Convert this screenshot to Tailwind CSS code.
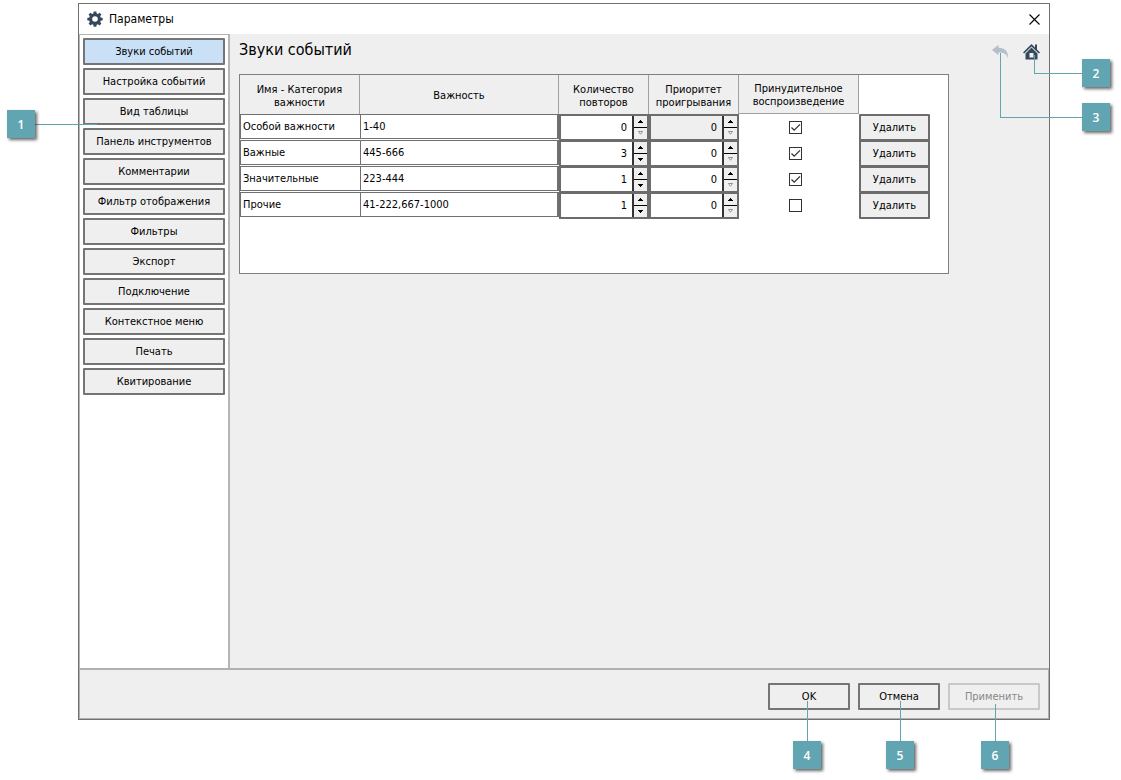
<!DOCTYPE html>
<html lang="ru">
<head>
<meta charset="utf-8">
<title>Параметры</title>
<script src="https://cdn.jsdelivr.net/npm/@tailwindcss/browser@4"></script>
</head>
<body class="bg-white text-black text-[11px] leading-[13px] font-['DejaVu_Sans_Condensed','DejaVu_Sans',sans-serif]">
<svg class="hidden">
  <symbol id="up" viewBox="0 0 5 3"><path d="M2 0h1v1h1v1h1v1H0V2h1V1h1z"/></symbol>
  <symbol id="down" viewBox="0 0 5 3"><path d="M0 0h5v1H4v1H3v1H2V2H1V1H0z"/></symbol>
  <symbol id="down-off" viewBox="0 0 5 4"><path d="M.5.5h4L2.500 3.200z" fill="#fff" stroke="#777" stroke-width=".8"/></symbol>
</svg>
<div class="min-h-screen flex flex-col pt-[3px] pb-[60px] pl-[78px] pr-[71px]">
<main class="relative grow flex flex-col border border-[#707070] bg-[#efefef]">
  <header class="h-[30px] bg-white flex items-center pl-2 pr-[9px] gap-1.5">
    <svg class="size-4" viewBox="0 0 16 16" fill="#34495e" fill-rule="evenodd"><path d="M6.700 .5h2.600l.4 2 1.200.5 1.700-1.200 1.800 1.800-1.200 1.700.5 1.200 2 .4v2.400l-2 .4-.5 1.200 1.200 1.700-1.800 1.800-1.700-1.200-1.200.5-.4 2H6.700l-.4-2-1.200-.5-1.700 1.200-1.800-1.800 1.200-1.700-.5-1.200-2-.4V6.900l2-.4.5-1.200-1.200-1.700 1.800-1.800 1.700 1.200 1.200-.5zM8 5.200a2.800 2.800 0 1 0 0 5.600 2.800 2.800 0 0 0 0-5.600z"/></svg>
    <h1 class="text-[12px]">Параметры</h1>
    <button type="button" aria-label="Закрыть" class="ml-auto"><svg class="size-[11px]" viewBox="0 0 11 11" stroke="#000" stroke-width="1.100"><path d="M.5.5l10 10M10.500.5l-10 10"/></svg></button>
  </header>
  <div class="grow flex border-l border-[#b5b5b5]">
    <nav class="w-[150px] shrink-0 bg-white border-t border-r-2 border-[#b5b5b5] pt-[3px] px-[3px] flex flex-col gap-[3px]">
      <button type="button" class="h-[27px] border-2 border-[#757575] rounded-[1px] bg-[#c9e0f7]">Звуки событий</button>
      <button type="button" class="h-[27px] border-2 border-[#757575] rounded-[1px] bg-[#efefef]">Настройка событий</button>
      <button type="button" class="h-[27px] border-2 border-[#757575] rounded-[1px] bg-[#efefef]">Вид таблицы</button>
      <button type="button" class="h-[27px] border-2 border-[#757575] rounded-[1px] bg-[#efefef]">Панель инструментов</button>
      <button type="button" class="h-[27px] border-2 border-[#757575] rounded-[1px] bg-[#efefef]">Комментарии</button>
      <button type="button" class="h-[27px] border-2 border-[#757575] rounded-[1px] bg-[#efefef]">Фильтр отображения</button>
      <button type="button" class="h-[27px] border-2 border-[#757575] rounded-[1px] bg-[#efefef]">Фильтры</button>
      <button type="button" class="h-[27px] border-2 border-[#757575] rounded-[1px] bg-[#efefef]">Экспорт</button>
      <button type="button" class="h-[27px] border-2 border-[#757575] rounded-[1px] bg-[#efefef]">Подключение</button>
      <button type="button" class="h-[27px] border-2 border-[#757575] rounded-[1px] bg-[#efefef]">Контекстное меню</button>
      <button type="button" class="h-[27px] border-2 border-[#757575] rounded-[1px] bg-[#efefef]">Печать</button>
      <button type="button" class="h-[27px] border-2 border-[#757575] rounded-[1px] bg-[#efefef]">Квитирование</button>
    </nav>
    <section class="grow pl-[9px] pr-[9px]">
      <div class="flex items-center h-[40px] pb-2">
        <h2 class="text-[16px] leading-5 grow">Звуки событий</h2>
        <div class="flex gap-3.5 pt-1">
          <button type="button" disabled aria-label="Назад"><svg class="w-[17px] h-4" viewBox="0 0 17 16" fill="#b5bfc9"><path d="M0 6L6.500.8v2.900c6.500 0 10 3.600 9.500 10.500-1.500-4.200-4-5.700-9.500-5.700v2.700z"/></svg></button>
          <button type="button" aria-label="Домой"><svg class="w-[17px] h-4" viewBox="0 0 17 16" fill="#34495e"><path d="M8.500 0L12 3.400V.5h2v4.900l3 3-1.200 1.200L8.500 2.400 1.200 9.600 0 8.400z"/><path fill-rule="evenodd" d="M8.500 3.600L14.500 9.500V15.500h-12V9.500zM6.500 9v4.500h4V9z"/></svg></button>
        </div>
      </div>
      <div class="w-[710px] max-w-full h-[200px] bg-white border border-[#808080]">
        <table class="table-fixed w-[690px] border-separate border-spacing-0">
          <colgroup><col class="w-[120px]"><col class="w-[199px]"><col class="w-[90px]"><col class="w-[90px]"><col class="w-[120px]"><col class="w-[71px]"></colgroup>
          <thead>
            <tr class="h-[39px]">
              <th scope="col" class="p-0 pt-0.5 font-normal bg-[#efefef] border-r border-[#a0a0a0]">Имя - Категория<br>важности</th>
              <th scope="col" class="p-0 pt-0.5 font-normal bg-[#efefef] border-r border-[#a0a0a0]">Важность</th>
              <th scope="col" class="p-0 pt-0.5 font-normal bg-[#efefef] border-r border-[#a0a0a0]">Количество<br>повторов</th>
              <th scope="col" class="p-0 pt-0.5 font-normal bg-[#efefef] border-r border-[#a0a0a0]">Приоритет<br>проигрывания</th>
              <th scope="col" class="p-0 pt-0.5 font-normal bg-[#efefef] border-r border-b border-[#a0a0a0]">Принудительное<br>воспроизведение</th>
              <td></td>
            </tr>
          </thead>
          <tbody>
            <tr class="h-[26px]">
              <td class="p-0 align-top"><input aria-label="Имя категории 1" value="Особой важности" class="block w-full h-[25px] pl-0.5 border-y border-l border-[#707070] bg-white"></td>
              <td class="p-0 align-top"><input aria-label="Важность 1" value="1-40" class="block w-full h-[25px] pl-0.5 border border-r-2 border-[#707070] bg-white"></td>
              <td class="p-0 align-top"><div class="flex h-[27px] -mb-px border-2 border-[#6c6c6c]">
                <input inputmode="numeric" aria-label="Количество повторов 1" value="0" class="min-w-0 grow text-right pr-[5px] bg-white">
                <div class="w-[15px] shrink-0 flex flex-col border-l-2 border-[#333333] bg-[#efefef]">
                  <button type="button" aria-label="Больше" class="grow flex items-center justify-center border-b border-black"><svg class="w-[5px] h-[3px]"><use href="#up"/></svg></button>
                  <button type="button" disabled aria-label="Меньше" class="grow flex items-center justify-center"><svg class="w-[5px] h-1"><use href="#down-off"/></svg></button>
                </div></div></td>
              <td class="p-0 align-top"><div class="flex h-[27px] -mb-px border-2 border-[#6c6c6c]">
                <input inputmode="numeric" disabled aria-label="Приоритет проигрывания 1" value="0" class="min-w-0 grow text-right pr-[5px] bg-[#efefef]">
                <div class="w-[15px] shrink-0 flex flex-col border-l-2 border-[#333333] bg-[#efefef]">
                  <button type="button" aria-label="Больше" class="grow flex items-center justify-center border-b border-black"><svg class="w-[5px] h-[3px]"><use href="#up"/></svg></button>
                  <button type="button" disabled aria-label="Меньше" class="grow flex items-center justify-center"><svg class="w-[5px] h-1"><use href="#down-off"/></svg></button>
                </div></div></td>
              <td class="p-0"><label class="grid w-[13px] h-[13px] ml-[50px]"><input type="checkbox" checked aria-label="Принудительное воспроизведение 1" class="peer appearance-none size-[13px] border border-[#333333] bg-white [grid-area:1/1]"><svg class="invisible peer-checked:visible size-[13px] [grid-area:1/1] pointer-events-none" viewBox="0 0 13 13" fill="none" stroke="#333" stroke-width="1.300"><path d="M2.500 6.500L5.200 9.200 11 3.400"/></svg></label></td>
              <td class="p-0 align-top"><button type="button" class="block w-full h-[27px] -mb-px border-2 border-[#6c6c6c] rounded-[1px] bg-[#efefef]">Удалить</button></td>
            </tr>
            <tr class="h-[26px]">
              <td class="p-0 align-top"><input aria-label="Имя категории 2" value="Важные" class="block w-full h-[25px] pl-0.5 border-y border-l border-[#707070] bg-white"></td>
              <td class="p-0 align-top"><input aria-label="Важность 2" value="445-666" class="block w-full h-[25px] pl-0.5 border border-r-2 border-[#707070] bg-white"></td>
              <td class="p-0 align-top"><div class="flex h-[27px] -mb-px border-2 border-[#6c6c6c]">
                <input inputmode="numeric" aria-label="Количество повторов 2" value="3" class="min-w-0 grow text-right pr-[5px] bg-white">
                <div class="w-[15px] shrink-0 flex flex-col border-l-2 border-[#333333] bg-[#efefef]">
                  <button type="button" aria-label="Больше" class="grow flex items-center justify-center border-b border-black"><svg class="w-[5px] h-[3px]"><use href="#up"/></svg></button>
                  <button type="button" aria-label="Меньше" class="grow flex items-center justify-center"><svg class="w-[5px] h-[3px]"><use href="#down"/></svg></button>
                </div></div></td>
              <td class="p-0 align-top"><div class="flex h-[27px] -mb-px border-2 border-[#6c6c6c]">
                <input inputmode="numeric" aria-label="Приоритет проигрывания 2" value="0" class="min-w-0 grow text-right pr-[5px] bg-white">
                <div class="w-[15px] shrink-0 flex flex-col border-l-2 border-[#333333] bg-[#efefef]">
                  <button type="button" aria-label="Больше" class="grow flex items-center justify-center border-b border-black"><svg class="w-[5px] h-[3px]"><use href="#up"/></svg></button>
                  <button type="button" disabled aria-label="Меньше" class="grow flex items-center justify-center"><svg class="w-[5px] h-1"><use href="#down-off"/></svg></button>
                </div></div></td>
              <td class="p-0"><label class="grid w-[13px] h-[13px] ml-[50px]"><input type="checkbox" checked aria-label="Принудительное воспроизведение 2" class="peer appearance-none size-[13px] border border-[#333333] bg-white [grid-area:1/1]"><svg class="invisible peer-checked:visible size-[13px] [grid-area:1/1] pointer-events-none" viewBox="0 0 13 13" fill="none" stroke="#333" stroke-width="1.300"><path d="M2.500 6.500L5.200 9.200 11 3.400"/></svg></label></td>
              <td class="p-0 align-top"><button type="button" class="block w-full h-[27px] -mb-px border-2 border-[#6c6c6c] rounded-[1px] bg-[#efefef]">Удалить</button></td>
            </tr>
            <tr class="h-[26px]">
              <td class="p-0 align-top"><input aria-label="Имя категории 3" value="Значительные" class="block w-full h-[25px] pl-0.5 border-y border-l border-[#707070] bg-white"></td>
              <td class="p-0 align-top"><input aria-label="Важность 3" value="223-444" class="block w-full h-[25px] pl-0.5 border border-r-2 border-[#707070] bg-white"></td>
              <td class="p-0 align-top"><div class="flex h-[27px] -mb-px border-2 border-[#6c6c6c]">
                <input inputmode="numeric" aria-label="Количество повторов 3" value="1" class="min-w-0 grow text-right pr-[5px] bg-white">
                <div class="w-[15px] shrink-0 flex flex-col border-l-2 border-[#333333] bg-[#efefef]">
                  <button type="button" aria-label="Больше" class="grow flex items-center justify-center border-b border-black"><svg class="w-[5px] h-[3px]"><use href="#up"/></svg></button>
                  <button type="button" aria-label="Меньше" class="grow flex items-center justify-center"><svg class="w-[5px] h-[3px]"><use href="#down"/></svg></button>
                </div></div></td>
              <td class="p-0 align-top"><div class="flex h-[27px] -mb-px border-2 border-[#6c6c6c]">
                <input inputmode="numeric" aria-label="Приоритет проигрывания 3" value="0" class="min-w-0 grow text-right pr-[5px] bg-white">
                <div class="w-[15px] shrink-0 flex flex-col border-l-2 border-[#333333] bg-[#efefef]">
                  <button type="button" aria-label="Больше" class="grow flex items-center justify-center border-b border-black"><svg class="w-[5px] h-[3px]"><use href="#up"/></svg></button>
                  <button type="button" disabled aria-label="Меньше" class="grow flex items-center justify-center"><svg class="w-[5px] h-1"><use href="#down-off"/></svg></button>
                </div></div></td>
              <td class="p-0"><label class="grid w-[13px] h-[13px] ml-[50px]"><input type="checkbox" checked aria-label="Принудительное воспроизведение 3" class="peer appearance-none size-[13px] border border-[#333333] bg-white [grid-area:1/1]"><svg class="invisible peer-checked:visible size-[13px] [grid-area:1/1] pointer-events-none" viewBox="0 0 13 13" fill="none" stroke="#333" stroke-width="1.300"><path d="M2.500 6.500L5.200 9.200 11 3.400"/></svg></label></td>
              <td class="p-0 align-top"><button type="button" class="block w-full h-[27px] -mb-px border-2 border-[#6c6c6c] rounded-[1px] bg-[#efefef]">Удалить</button></td>
            </tr>
            <tr class="h-[26px]">
              <td class="p-0 align-top"><input aria-label="Имя категории 4" value="Прочие" class="block w-full h-[25px] pl-0.5 border-y border-l border-[#707070] bg-white"></td>
              <td class="p-0 align-top"><input aria-label="Важность 4" value="41-222,667-1000" class="block w-full h-[25px] pl-0.5 border border-r-2 border-[#707070] bg-white"></td>
              <td class="p-0 align-top"><div class="flex h-[27px] -mb-px border-2 border-[#6c6c6c]">
                <input inputmode="numeric" aria-label="Количество повторов 4" value="1" class="min-w-0 grow text-right pr-[5px] bg-white">
                <div class="w-[15px] shrink-0 flex flex-col border-l-2 border-[#333333] bg-[#efefef]">
                  <button type="button" aria-label="Больше" class="grow flex items-center justify-center border-b border-black"><svg class="w-[5px] h-[3px]"><use href="#up"/></svg></button>
                  <button type="button" aria-label="Меньше" class="grow flex items-center justify-center"><svg class="w-[5px] h-[3px]"><use href="#down"/></svg></button>
                </div></div></td>
              <td class="p-0 align-top"><div class="flex h-[27px] -mb-px border-2 border-[#6c6c6c]">
                <input inputmode="numeric" aria-label="Приоритет проигрывания 4" value="0" class="min-w-0 grow text-right pr-[5px] bg-white">
                <div class="w-[15px] shrink-0 flex flex-col border-l-2 border-[#333333] bg-[#efefef]">
                  <button type="button" aria-label="Больше" class="grow flex items-center justify-center border-b border-black"><svg class="w-[5px] h-[3px]"><use href="#up"/></svg></button>
                  <button type="button" disabled aria-label="Меньше" class="grow flex items-center justify-center"><svg class="w-[5px] h-1"><use href="#down-off"/></svg></button>
                </div></div></td>
              <td class="p-0"><label class="grid w-[13px] h-[13px] ml-[50px]"><input type="checkbox" aria-label="Принудительное воспроизведение 4" class="peer appearance-none size-[13px] border border-[#333333] bg-white [grid-area:1/1]"><svg class="invisible peer-checked:visible size-[13px] [grid-area:1/1] pointer-events-none" viewBox="0 0 13 13" fill="none" stroke="#333" stroke-width="1.300"><path d="M2.500 6.500L5.200 9.200 11 3.400"/></svg></label></td>
              <td class="p-0 align-top"><button type="button" class="block w-full h-[27px] -mb-px border-2 border-[#6c6c6c] rounded-[1px] bg-[#efefef]">Удалить</button></td>
            </tr>
          </tbody>
        </table>
      </div>
    </section>
  </div>
  <footer class="h-[51px] border-t-2 border-b border-l border-r border-[#b0b0b0] flex items-start justify-end gap-2 pt-[13px] pr-2">
    <button type="button" class="w-[82px] h-[27px] border-2 border-[#757575] rounded-[1px]">OK</button>
    <button type="button" class="w-[82px] h-[27px] border-2 border-[#757575] rounded-[1px]">Отмена</button>
    <button type="button" disabled class="w-[92px] h-[27px] border-2 border-[#c8c8c8] rounded-[1px] text-[#888888]">Применить</button>
  </footer>

  <!-- Numbered callouts with leader lines, laid over the window -->
  <div class="absolute inset-0 pointer-events-none text-white text-[12px] font-semibold font-['Open_Sans',sans-serif]">
    <i class="absolute -left-11 top-[120px] w-[62px] h-px bg-[#62a5b2]"></i>
    <b class="absolute -left-[72px] top-[106px] size-7 grid place-items-center bg-[#62a5b2] shadow-[2px_2px_3px_rgba(0,0,0,0.6)] font-semibold">1</b>
    <i class="absolute -right-[33px] top-[51px] w-12 h-[19px] border-l border-b border-[#62a5b2]"></i>
    <b class="absolute -right-[61px] top-[55px] size-7 grid place-items-center bg-[#62a5b2] shadow-[2px_2px_3px_rgba(0,0,0,0.6)] font-semibold">2</b>
    <i class="absolute -right-[33px] top-[49px] w-[82px] h-[65px] border-l border-b border-[#62a5b2]"></i>
    <b class="absolute -right-[61px] top-[99px] size-7 grid place-items-center bg-[#62a5b2] shadow-[2px_2px_3px_rgba(0,0,0,0.6)] font-semibold">3</b>
    <i class="absolute right-[241px] -bottom-[22px] w-px h-10 bg-[#62a5b2]"></i>
    <b class="absolute right-[228px] -bottom-[50px] size-7 grid place-items-center bg-[#62a5b2] shadow-[2px_2px_3px_rgba(0,0,0,0.6)] font-semibold">4</b>
    <i class="absolute right-[148px] -bottom-[22px] w-px h-10 bg-[#62a5b2]"></i>
    <b class="absolute right-[135px] -bottom-[50px] size-7 grid place-items-center bg-[#62a5b2] shadow-[2px_2px_3px_rgba(0,0,0,0.6)] font-semibold">5</b>
    <i class="absolute right-[53px] -bottom-[22px] w-px h-[37px] bg-[#62a5b2]"></i>
    <b class="absolute right-10 -bottom-[50px] size-7 grid place-items-center bg-[#62a5b2] shadow-[2px_2px_3px_rgba(0,0,0,0.6)] font-semibold">6</b>
  </div>
</main>
</div>
</body>
</html>
